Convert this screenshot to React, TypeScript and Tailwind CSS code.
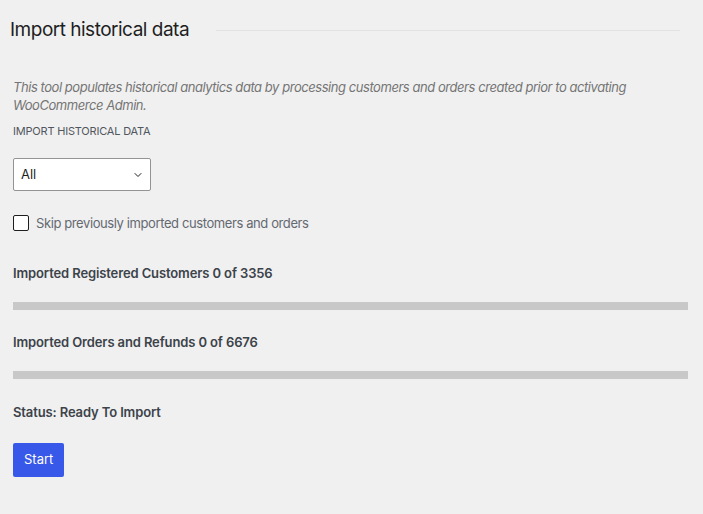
import { ChevronDown } from 'lucide-react';

const font = { fontFamily: 'Inter, "Noto Sans", sans-serif' };

const ProgressRow = ({ label, done, total }: { label: string; done: number; total: number }) => (
	<div>
		<p className="text-[13px] leading-5 font-semibold tracking-[-0.12px] text-[#3c434a]">
			{label} {done} of {total}
		</p>
		<div className="mt-[19px] h-[8px] w-full bg-[#c8c8c8]">
			<div className="h-full bg-[#3858e9]" style={{ width: `${(done / total) * 100}%` }} />
		</div>
	</div>
);

const App = () => {
	return (
		<div className="min-h-[514px] w-full bg-[#f0f0f0] pt-[18px]" style={font}>
			{/* Header */}
			<div className="flex items-center pl-[10px] pr-[23px]">
				<h2 className="text-[19px] leading-6 text-[#1e1e1e] tracking-[-0.5px]">Import historical data</h2>
				<div className="ml-[27px] flex-1 border-t border-[#e2e2e2]" />
			</div>

			<div className="pl-[13px] pr-[15px]">
				<p className="mt-[36px] text-[13px] leading-[18px] italic tracking-[-0.45px] text-[#757575] pr-[40px]">
					This tool populates historical analytics data by processing customers and orders created prior to
					activating WooCommerce Admin.
				</p>

				<p className="mt-[9px] text-[11px] leading-4 uppercase tracking-[-0.2px] text-[#50575e]">
					Import historical data
				</p>

				{/* Select */}
				<div className="mt-[19px] flex h-[33px] w-[138px] items-center justify-between rounded-[2px] border border-[#949494] bg-white pl-[7px] pr-[6px]">
					<span className="text-[13px] text-[#1e1e1e]">All</span>
					<ChevronDown size={12} strokeWidth={2} className="text-[#1e1e1e]" />
				</div>

				{/* Checkbox */}
				<label className="mt-[24px] flex items-center gap-[7px]">
					<span className="h-[16px] w-[16px] rounded-[2px] border border-[#1e1e1e] bg-white" />
					<span className="text-[13px] leading-4 tracking-[-0.4px] text-[#646970]">
						Skip previously imported customers and orders
					</span>
				</label>

				<div className="mt-[32px]">
					<ProgressRow label="Imported Registered Customers" done={0} total={3356} />
				</div>
				<div className="mt-[22px]">
					<ProgressRow label="Imported Orders and Refunds" done={0} total={6676} />
				</div>

				<p className="mt-[23px] text-[13px] leading-5 font-semibold tracking-[-0.12px] text-[#3c434a]">
					Status: Ready To Import
				</p>

				<button className="mt-[21px] h-[34px] rounded-[2px] bg-[#3858e9] px-[11px] text-[13px] text-white">
					Start
				</button>
			</div>
		</div>
	);
};

export default App;
